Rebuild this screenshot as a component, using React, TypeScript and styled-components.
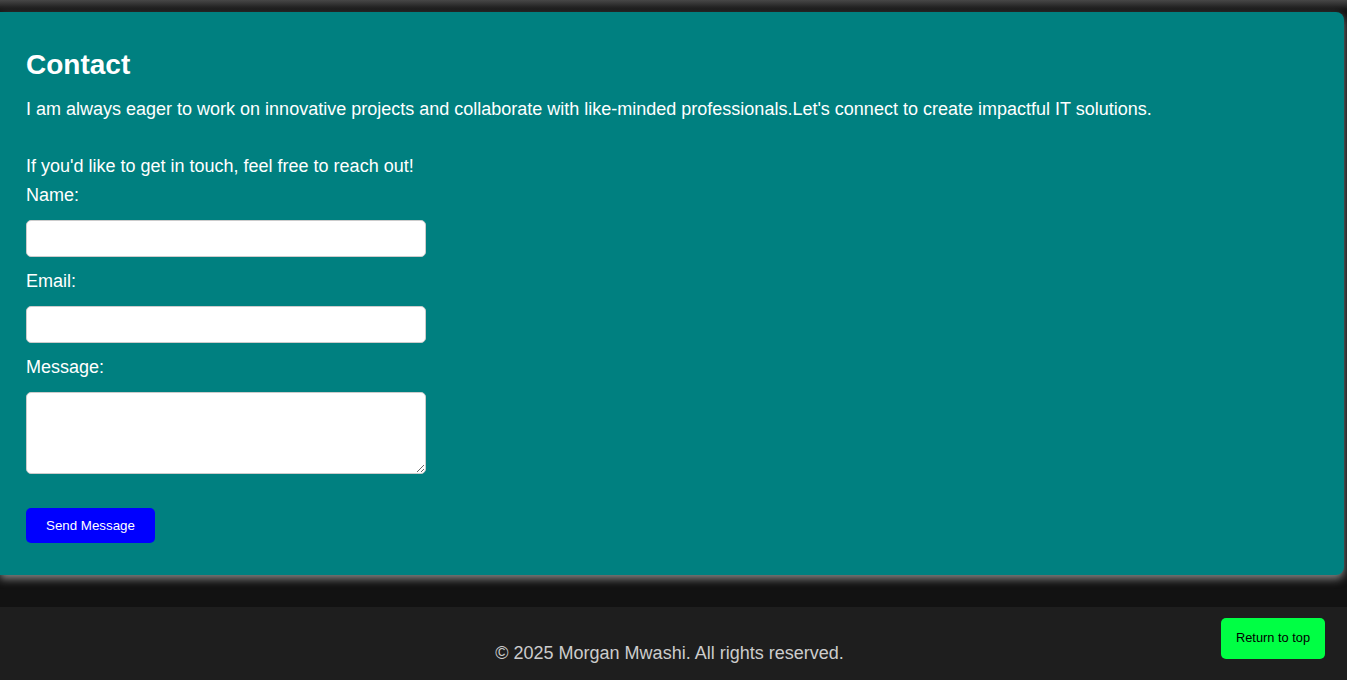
import React from "react";
import styled, { createGlobalStyle } from "styled-components";

const GlobalStyle = createGlobalStyle`
  html, body {
    margin: 0;
    padding: 0;
    background: #121212;
    font-family: "Liberation Sans", Arial, sans-serif;
    overflow: hidden;
  }
  * { box-sizing: border-box; }
`;

const Page = styled.div`
  display: flex;
  flex-direction: column;
  height: 680px;
`;

const PrevSectionShadow = styled.div`
  height: 12px;
  background: linear-gradient(#474747, #1a1a1a 75%, #121212);
`;

const Section = styled.section`
  background: #008080;
  margin-right: 3px;
  border-radius: 0 8px 8px 0;
  box-shadow: 0 4px 8px rgba(190, 190, 190, 0.65);
  padding: 37px 26px 32px;
  height: 563px;
  color: #ffffff;
`;

const Title = styled.h2`
  margin: 0;
  font-size: 28px;
  line-height: 32px;
  font-weight: 700;
`;

const Text = styled.p<{ $top: number }>`
  margin: ${(p) => p.$top}px 0 0;
  font-size: 18px;
  line-height: 20.7px;
`;

const Form = styled.form`
  display: flex;
  flex-direction: column;
  align-items: flex-start;
  margin-top: 9px;
`;

const Label = styled.label`
  display: block;
  font-size: 18px;
  line-height: 20.7px;
  margin-bottom: 14px;
`;

const Input = styled.input`
  width: 400px;
  height: 37px;
  border: 1px solid #cccccc;
  border-radius: 5px;
  background: #ffffff;
  margin: 0 0 14px;
  padding: 8px;
  font-size: 16px;
  font-family: inherit;
`;

const TextArea = styled.textarea`
  width: 400px;
  height: 82px;
  border: 1px solid #cccccc;
  border-radius: 5px;
  background: #ffffff;
  margin: 0;
  padding: 8px;
  font-family: inherit;
  font-size: 16px;
`;

const SendButton = styled.button`
  margin-top: 34px;
  background: #0000ff;
  color: #ffffff;
  border: none;
  border-radius: 5px;
  padding: 10px 20px;
  font-family: "Liberation Sans", Arial, sans-serif;
  font-size: 13.33px;
  line-height: 15px;
  cursor: pointer;
`;

const Footer = styled.footer`
  margin-top: 32px;
  background: #1e1e1e;
  height: 73px;
  padding: 36px 8px 0 0;
  text-align: center;
  color: #cccccc;
  font-size: 18px;
  line-height: 20.7px;
`;

const TopButton = styled.button`
  position: fixed;
  right: 22px;
  bottom: 21px;
  background: #00ff44;
  color: #000000;
  border: none;
  border-radius: 5px;
  padding: 12px 15px 14px;
  font-family: "Liberation Sans", Arial, sans-serif;
  font-size: 12.8px;
  line-height: 15px;
  cursor: pointer;
`;

export default function App() {
  return (
    <>
      <GlobalStyle />
      <Page>
        <PrevSectionShadow />
        <Section id="contact">
          <Title>Contact</Title>
          <Text $top={18}>
            I am always eager to work on innovative projects and collaborate with like-minded
            professionals.Let's connect to create impactful IT solutions.
          </Text>
          <Text $top={36}>If you'd like to get in touch, feel free to reach out!</Text>
          <Form onSubmit={(e) => e.preventDefault()}>
            <Label htmlFor="name">Name:</Label>
            <Input id="name" type="text" />
            <Label htmlFor="email">Email:</Label>
            <Input id="email" type="email" />
            <Label htmlFor="message">Message:</Label>
            <TextArea id="message" />
            <SendButton type="submit">Send Message</SendButton>
          </Form>
        </Section>
        <Footer>© 2025 Morgan Mwashi. All rights reserved.</Footer>
      </Page>
      <TopButton type="button">Return to top</TopButton>
    </>
  );
}
